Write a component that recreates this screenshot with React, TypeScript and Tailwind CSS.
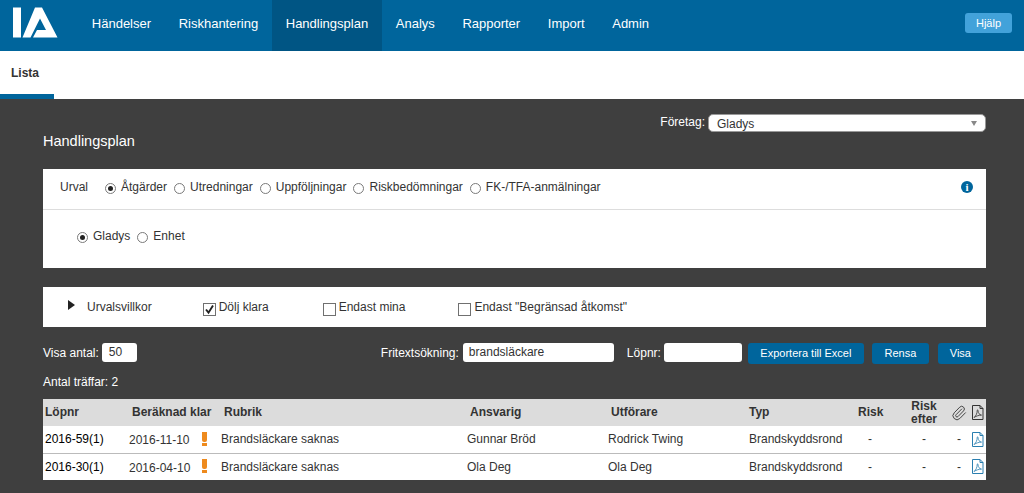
import { Paperclip } from "lucide-react";

const navItems = ["Händelser", "Riskhantering", "Handlingsplan", "Analys", "Rapporter", "Import", "Admin"];

const rows = [
  { nr: "2016-59(1)", date: "2016-11-10", title: "Brandsläckare saknas", owner: "Gunnar Bröd", doer: "Rodrick Twing" },
  { nr: "2016-30(1)", date: "2016-04-10", title: "Brandsläckare saknas", owner: "Ola Deg", doer: "Ola Deg" },
];

function Logo() {
  return (
    <svg width="46" height="31" viewBox="0 0 46 31" className="ml-[12px] mr-[20px] -mt-[7px] shrink-0">
      <rect x="1" y="0.5" width="8" height="30" fill="#fff" />
      <path d="M23 0.5H30L45.5 30.5H21L25 23H34L28 11.5L18.5 30.5H10.5Z" fill="#fff" />
    </svg>
  );
}

function Radio({ label, checked = false }: { label: string; checked?: boolean }) {
  return (
    <span className="flex items-center gap-[5px]">
      <span className="flex h-[11px] w-[11px] items-center justify-center rounded-full border border-[#7a7a7a] bg-white">
        {checked && <span className="h-[5px] w-[5px] rounded-full bg-[#222]" />}
      </span>
      <span className="-mt-[2px]">{label}</span>
    </span>
  );
}

function Check({ label, checked = false, className }: { label: string; checked?: boolean; className: string }) {
  return (
    <span className={`flex items-center gap-[3px] ${className}`}>
      <span className="mt-[4px] flex h-[13px] w-[13px] items-center justify-center border border-[#707070] bg-white">
        {checked && (
          <svg width="11" height="11" viewBox="0 0 11 11">
            <path d="M2 5.5l2.5 3.2 4.5-7.2" fill="none" stroke="#222" strokeWidth="1.9" />
          </svg>
        )}
      </span>
      <span>{label}</span>
    </span>
  );
}

function PdfIcon({ color }: { color: string }) {
  return (
    <svg width="13" height="15" viewBox="0 0 13 15" fill="none" stroke={color} strokeWidth="1">
      <path d="M1.5 0.5h7.5l3 3v11h-10.500z" />
      <path d="M9 0.500v3h3" />
      <path d="M3 12.500c2-1.500 3.200-4.200 3.200-7 0-1 .8-1 .8 0 0 2.700 1.500 4.300 3.500 4.600-2.500 0-5.200.9-7.500 2.400z" strokeWidth="0.8" />
    </svg>
  );
}

function ActionButton({ label, className }: { label: string; className: string }) {
  return (
    <button className={`h-[21px] rounded-[3px] bg-[#00659c] text-center text-[11px] text-white ${className}`}>
      {label}
    </button>
  );
}

function Warning() {
  return (
    <span className="ml-[12px] -mt-[1px] flex w-[5px] flex-col gap-[1px]">
      <span className="h-[10px] rounded-b-[2px] bg-[#ee8a1d]" />
      <span className="h-[3px] bg-[#ee8a1d]" />
    </span>
  );
}

export default function App() {
  return (
    <div className="h-[493px] overflow-hidden bg-[#3f3f3f] font-['Liberation_Sans',Arial,sans-serif] text-[12px] text-[#333]">
      <header className="flex h-[51px] items-stretch bg-[#00659c] text-[13px] text-white">
        <div className="flex items-center"><Logo /></div>
        <nav className="flex">
          {navItems.map((item) => (
            <a
              key={item}
              className={`flex items-center px-[13.8px] pb-[4px] ${item === "Handlingsplan" ? "bg-[#005584]" : ""}`}
            >
              {item}
            </a>
          ))}
        </nav>
        <div className="ml-auto flex items-start pr-[12px] pt-[13px]">
          <button className="h-[20px] w-[47px] rounded-[3px] bg-[#42a2da] text-[11px] text-white">Hjälp</button>
        </div>
      </header>

      <div className="h-[48px] bg-white">
        <div className="flex h-[48px] w-[54px] items-start border-b-[5px] border-[#00659c] pl-[11px] pt-[15px] text-[12px] font-bold leading-[14px]">
          Lista
        </div>
      </div>

      <main className="px-[43px] pr-[38px]">
        <div className="flex h-[70px] justify-between">
          <h1 className="pt-[33px] text-[14.5px] leading-[18px] text-white">Handlingsplan</h1>
          <div className="flex items-start gap-[3px] pt-[15px] text-white">
            <span className="mt-[1px] leading-[15px]">Företag:</span>
            <div className="flex h-[18px] w-[278px] items-center justify-between rounded-[5px] border border-[#999] bg-white pl-[8px] pr-[8px] text-[#333]">
              <span className="mt-[1px]">Gladys</span>
              <span className="h-0 w-0 border-x-[3.5px] border-t-[5px] border-x-transparent border-t-[#888]" />
            </div>
          </div>
        </div>

        <section className="h-[99px] bg-white">
          <div className="flex h-[41px] items-center border-b border-[#ddd] pb-[2px] pl-[17px] pr-[13px]">
            <span className="mr-[17px] -mt-[2px]">Urval</span>
            <div className="flex gap-[7px]">
              <Radio label="Åtgärder" checked />
              <Radio label="Utredningar" />
              <Radio label="Uppföljningar" />
              <Radio label="Riskbedömningar" />
              <Radio label="FK-/TFA-anmälningar" />
            </div>
            <span className="ml-auto -mt-[2px] flex h-[12px] w-[12px] items-center justify-center rounded-full bg-[#00659c] font-['Liberation_Serif',serif] text-[11px] font-bold leading-none text-white">
              i
            </span>
          </div>
          <div className="flex gap-[7px] pl-[34px] pt-[19px]">
            <Radio label="Gladys" checked />
            <Radio label="Enhet" />
          </div>
        </section>

        <section className="mt-[19px] flex h-[40px] items-center bg-white pl-[25px]">
          <span className="h-0 w-0 -mt-[4px] border-y-[5px] border-l-[7px] border-y-transparent border-l-[#222]" />
          <span className="ml-[12px] mr-[51px] -mt-[1px]">Urvalsvillkor</span>
          <Check label="Dölj klara" checked className="mr-[54px]" />
          <Check label="Endast mina" className="mr-[53px]" />
          <Check label="Endast &quot;Begränsad åtkomst&quot;" className="" />
        </section>

        <div className="mt-[15px] flex h-[22px] items-center text-white">
          <span>Visa antal:</span>
          <span className="ml-[3px] -mt-[2px] h-[19px] w-[35px] rounded-[3px] bg-white pl-[7px] leading-[19px] text-[#333]">50</span>
          <span className="ml-[244px]">Fritextsökning:</span>
          <span className="ml-[4px] -mt-[2px] h-[19px] w-[151px] rounded-[3px] bg-white pl-[6px] leading-[19px] text-[#333]">brandsläckare</span>
          <span className="ml-[13px]">Löpnr:</span>
          <span className="ml-[3px] -mt-[2px] h-[19px] w-[78px] rounded-[3px] bg-white" />
          <ActionButton label="Exportera till Excel" className="ml-[6px] w-[116px]" />
          <ActionButton label="Rensa" className="ml-[8px] w-[57px]" />
          <ActionButton label="Visa" className="ml-[9px] w-[45px]" />
        </div>

        <p className="mt-[11px] leading-[15px] text-white">Antal träffar: 2</p>

        <table className="mt-[9px] w-[943px] table-fixed border-collapse bg-white">
          <colgroup>
            <col className="w-[86px]" />
            <col className="w-[92px]" />
            <col className="w-[246px]" />
            <col className="w-[141px]" />
            <col className="w-[141px]" />
            <col className="w-[105px]" />
            <col className="w-[50px]" />
            <col className="w-[40px]" />
            <col className="w-[42px]" />
          </colgroup>
          <thead>
            <tr className="h-[27px] bg-[#dcdcdc] text-left text-[12px] font-bold leading-[13px]">
              <th className="pl-[2px]">Löpnr</th>
              <th className="pl-[3px]">Beräknad klar</th>
              <th className="pl-[3px]">Rubrik</th>
              <th className="pl-[3px]">Ansvarig</th>
              <th className="pl-[3px]">Utförare</th>
              <th className="pl-0">Typ</th>
              <th className="pl-[4px]">Risk</th>
              <th className="text-center">Risk<br />efter</th>
              <th>
                <div className="flex items-center justify-end gap-[4px] pr-[2px]">
                  <Paperclip size={16} strokeWidth={1.5} color="#444" className="shrink-0" />
                  <span className="shrink-0"><PdfIcon color="#333" /></span>
                </div>
              </th>
            </tr>
          </thead>
          <tbody>
            {rows.map((row) => (
              <tr key={row.nr} className="h-[27px] border-b border-[#bbb] last:border-b-0">
                <td className="pl-[2px] text-black">{row.nr}</td>
                <td>
                  <div className="flex items-center">
                    <span className="mt-[2px]">{row.date}</span>
                    <Warning />
                  </div>
                </td>
                <td>{row.title}</td>
                <td>{row.owner}</td>
                <td>{row.doer}</td>
                <td className="pl-0">Brandskyddsrond</td>
                <td className="pl-[14px]">-</td>
                <td className="text-center">-</td>
                <td>
                  <div className="flex items-center justify-between pl-[13px] pr-[2px]">
                    <span>-</span>
                    <PdfIcon color="#2a7fb0" />
                  </div>
                </td>
              </tr>
            ))}
          </tbody>
        </table>
      </main>
    </div>
  );
}
